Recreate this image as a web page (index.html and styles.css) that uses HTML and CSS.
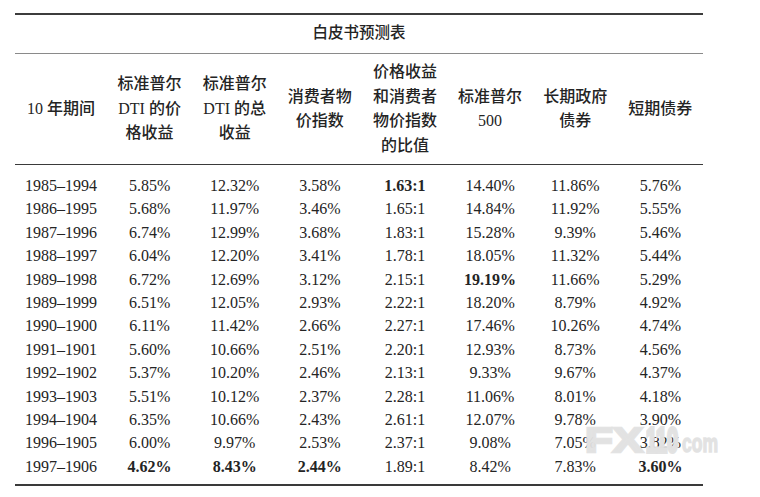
FILE: index.html
```html
<!DOCTYPE html>
<html lang="zh-CN">
<head>
<meta charset="utf-8">
<title>白皮书预测表</title>
<link rel="stylesheet" href="styles.css">
</head>
<body>
<div class="page">
  <table class="forecast">
    <colgroup>
      <col class="c-period">
      <col span="7" class="c-val">
    </colgroup>
    <thead>
      <tr class="title-row"><th colspan="8">白皮书预测表</th></tr>
      <tr class="head-row">
        <th>10 年期间</th>
        <th>标准普尔<br>DTI 的价<br>格收益</th>
        <th>标准普尔<br>DTI 的总<br>收益</th>
        <th>消费者物<br>价指数</th>
        <th>价格收益<br>和消费者<br>物价指数<br>的比值</th>
        <th>标准普尔<br>500</th>
        <th>长期政府<br>债券</th>
        <th>短期债券</th>
      </tr>
    </thead>
    <tbody>
      <tr><td>1985–1994</td><td>5.85%</td><td>12.32%</td><td>3.58%</td><td class="b">1.63:1</td><td>14.40%</td><td>11.86%</td><td>5.76%</td></tr>
      <tr><td>1986–1995</td><td>5.68%</td><td>11.97%</td><td>3.46%</td><td>1.65:1</td><td>14.84%</td><td>11.92%</td><td>5.55%</td></tr>
      <tr><td>1987–1996</td><td>6.74%</td><td>12.99%</td><td>3.68%</td><td>1.83:1</td><td>15.28%</td><td>9.39%</td><td>5.46%</td></tr>
      <tr><td>1988–1997</td><td>6.04%</td><td>12.20%</td><td>3.41%</td><td>1.78:1</td><td>18.05%</td><td>11.32%</td><td>5.44%</td></tr>
      <tr><td>1989–1998</td><td>6.72%</td><td>12.69%</td><td>3.12%</td><td>2.15:1</td><td class="b">19.19%</td><td>11.66%</td><td>5.29%</td></tr>
      <tr><td>1989–1999</td><td>6.51%</td><td>12.05%</td><td>2.93%</td><td>2.22:1</td><td>18.20%</td><td>8.79%</td><td>4.92%</td></tr>
      <tr><td>1990–1900</td><td>6.11%</td><td>11.42%</td><td>2.66%</td><td>2.27:1</td><td>17.46%</td><td>10.26%</td><td>4.74%</td></tr>
      <tr><td>1991–1901</td><td>5.60%</td><td>10.66%</td><td>2.51%</td><td>2.20:1</td><td>12.93%</td><td>8.73%</td><td>4.56%</td></tr>
      <tr><td>1992–1902</td><td>5.37%</td><td>10.20%</td><td>2.46%</td><td>2.13:1</td><td>9.33%</td><td>9.67%</td><td>4.37%</td></tr>
      <tr><td>1993–1903</td><td>5.51%</td><td>10.12%</td><td>2.37%</td><td>2.28:1</td><td>11.06%</td><td>8.01%</td><td>4.18%</td></tr>
      <tr><td>1994–1904</td><td>6.35%</td><td>10.66%</td><td>2.43%</td><td>2.61:1</td><td>12.07%</td><td>9.78%</td><td>3.90%</td></tr>
      <tr><td>1996–1905</td><td>6.00%</td><td>9.97%</td><td>2.53%</td><td>2.37:1</td><td>9.08%</td><td>7.05%</td><td>3.82%</td></tr>
      <tr><td>1997–1906</td><td class="b">4.62%</td><td class="b">8.43%</td><td class="b">2.44%</td><td>1.89:1</td><td>8.42%</td><td>7.83%</td><td class="b">3.60%</td></tr>
    </tbody>
  </table>
  <div class="watermark" aria-hidden="true"><span class="wm-fx">FX</span><span class="wm-num">110</span><span class="wm-com">com</span></div>
</div>
</body>
</html>
```

FILE: styles.css
```css
html, body {
  margin: 0;
  padding: 0;
  background: #ffffff;
}

.page {
  position: relative;
  width: 760px;
  height: 497px;
  padding-top: 13px;
  padding-left: 15px;
  box-sizing: border-box;
}

.forecast {
  width: 688px;
  table-layout: fixed;
  border-collapse: collapse;
  font-family: "Liberation Serif", "Noto Sans CJK SC", serif;
  font-size: 16px;
  color: #242424;
}

.c-period { width: 92px; }
.c-val { width: 85.14px; }

.forecast th {
  font-weight: 500;
  padding: 0;
}

.title-row th {
  line-height: 36px;
  padding: 0 0 2px;
  border-top: 2px solid #3c3c3c;
  border-bottom: 1px solid #8a8a8a;
  text-align: center;
  vertical-align: middle;
  font-size: 15.5px;
}

.head-row th {
  height: 97px;
  padding: 6px 0;
  line-height: 24.5px;
  text-align: center;
  vertical-align: middle;
  border-bottom: 1.5px solid #3a3a3a;
}

.forecast td {
  line-height: 23.4px;
  padding: 0;
  text-align: center;
  white-space: nowrap;
}

.forecast tbody tr:first-child td {
  padding-top: 9px;
}

.forecast tbody tr:last-child td {
  padding-bottom: 6px;
  border-bottom: 2px solid #3a3a3a;
}

.forecast td.b {
  font-weight: bold;
}

.watermark {
  position: absolute;
  left: 585px;
  top: 422px;
  display: flex;
  align-items: baseline;
  font-family: "Liberation Sans", "DejaVu Sans", sans-serif;
  font-weight: bold;
  font-size: 35px;
  line-height: 35px;
  color: rgba(226, 226, 226, 0.95);
  -webkit-text-stroke: 2.5px rgba(226, 226, 226, 0.95);
  white-space: nowrap;
}

.wm-fx,
.wm-num,
.wm-com {
  display: inline-block;
  transform-origin: left bottom;
}

.wm-fx {
  width: 61px;
  font-weight: 900;
  transform: scaleX(1.3);
}

.wm-num {
  width: 36px;
  -webkit-text-stroke-width: 4px;
  transform: scaleX(0.57);
}

.wm-com {
  width: 36px;
  font-size: 25px;
  -webkit-text-stroke-width: 1.5px;
  transform: scaleX(0.7);
}
```
